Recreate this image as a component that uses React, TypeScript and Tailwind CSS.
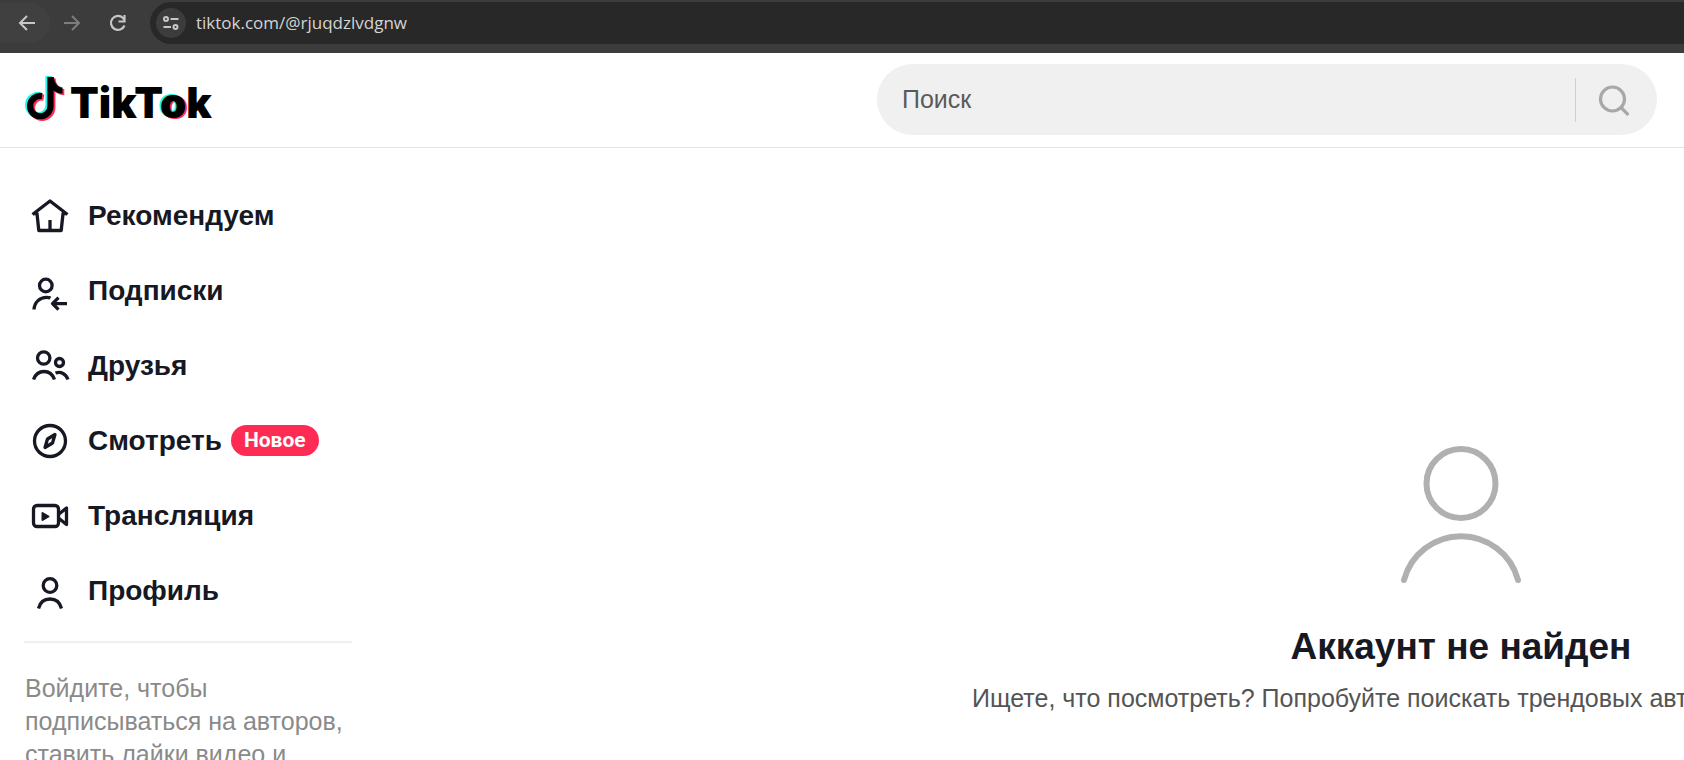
import type {ReactNode} from 'react'

function Icon({children}: {children: ReactNode}) {
  return (
    <svg className="size-10 shrink-0" viewBox="0 0 40 40" fill="none" stroke="currentColor" strokeWidth="3.3"
         strokeLinejoin="round" aria-hidden="true">
      {children}
    </svg>
  )
}

const links = [
  {
    label: 'Рекомендуем',
    icon: <>
      <path d="M2.500 18.500L20 5L37.500 18.500M3 17.700H7L8.800 34.500H31.200L33 17.700H37"/>
      <path d="M20 24V34"/>
    </>
  },
  {
    label: 'Подписки',
    icon: <>
      <circle cx="15.800" cy="14.500" r="6.300"/>
      <path d="M4 38.500C4.500 31 10 26.300 16.500 26.300C18 26.300 19.500 26.500 20.500 27"/>
      <path d="M37 32.700H22.500M28.500 26.700L22.500 32.700L28.500 38.700"/>
    </>
  },
  {
    label: 'Друзья',
    icon: <>
      <circle cx="13.700" cy="12" r="6.200"/>
      <circle cx="29.500" cy="16.500" r="4"/>
      <path d="M3.500 33.500C5.500 28 9 25.500 14 25.500C19 25.500 22.500 28 24.500 33.500"/>
      <path d="M25.500 27C31 25 36 28 38 33.500"/>
    </>
  },
  {
    label: 'Смотреть',
    badge: 'Новое',
    icon: <>
      <circle cx="20" cy="20" r="15.500"/>
      <path d="M25 13.500L17.500 18L15 26.500L22.500 22Z"/>
    </>
  },
  {
    label: 'Трансляция',
    icon: <>
      <rect x="3.500" y="9.500" width="25" height="21" rx="3.500"/>
      <path d="M29 18L36.500 12V28.500L29 22.500"/>
      <path d="M12.500 17V24L18.500 20.500Z" fill="currentColor" strokeWidth="2"/>
    </>
  },
  {
    label: 'Профиль',
    icon: <>
      <circle cx="20" cy="14.500" r="6.800"/>
      <path d="M8.500 37.500C10 31.500 14 28 20 28C26 28 30 31.500 31.500 37.500"/>
    </>
  }
]

function BrowserBar() {
  return (
    <div className="flex h-[53px] shrink-0 items-start gap-2 bg-[#3c3c3c] pt-[2px] text-[#c7c7c7]">
      <div className="flex h-[42px] items-center">
        <button type="button" aria-label="Назад" className="flex h-10 w-[50px] items-center justify-center rounded-r-full bg-[#404040] pl-1">
          <svg className="size-5" viewBox="0 0 20 20" fill="none" stroke="currentColor" strokeWidth="2">
            <path d="M18 10H3M10 3L3 10L10 17"/>
          </svg>
        </button>
        <button type="button" aria-label="Вперёд" className="flex h-10 w-11 items-center justify-center text-[#7d7d7d]">
          <svg className="size-5" viewBox="0 0 20 20" fill="none" stroke="currentColor" strokeWidth="2">
            <path d="M2 10H17M10 3L17 10L10 17"/>
          </svg>
        </button>
        <button type="button" aria-label="Обновить" className="flex h-10 w-12 items-center justify-center">
          <svg className="size-5" viewBox="0 0 20 20" fill="none" stroke="currentColor" strokeWidth="2.2">
            <path d="M16.500 12.500A7 7 0 1 1 15 5L17 7.500M16.500 2V8.500H10.500"/>
          </svg>
        </button>
      </div>
      <div className="flex h-[42px] flex-1 items-center gap-[10px] rounded-l-full bg-[#282828] pl-[6px]">
        <button type="button" aria-label="Сведения о сайте" className="flex size-[30px] items-center justify-center rounded-full bg-[#3c3c3c]">
          <svg className="size-4" viewBox="0 0 16 16" fill="none" stroke="currentColor" strokeWidth="2">
            <circle cx="3" cy="4" r="2"/>
            <path d="M7.500 4H15.500M0.500 12H8"/>
            <circle cx="12.500" cy="12" r="2"/>
          </svg>
        </button>
        <input aria-label="Адрес" defaultValue="tiktok.com/@rjuqdzlvdgnw"
               className="min-w-0 flex-1 bg-transparent font-['Open_Sans',sans-serif] text-[17px] text-[#d4d4d4] outline-none"/>
      </div>
    </div>
  )
}

function Note({color, transform}: {color: string, transform: string}) {
  return (
    <g transform={transform}>
      <path d="M26.500 1V30A10.200 10.200 0 1 1 18 20" fill="none" stroke={color} strokeWidth="6.200"/>
      <path d="M25 1H29.600C30.300 7 33.500 11 38.500 11.500V17.600C35 17.600 32 16.500 29.500 14.500H25Z" fill={color}/>
    </g>
  )
}

function Logo() {
  return (
    <a href="/" className="flex items-center gap-[2px] text-black">
      <svg className="h-12 w-11" viewBox="0 0 44 48" aria-hidden="true">
        <Note color="#25f4ee" transform="translate(-2 -1)"/>
        <Note color="#fe2c55" transform="translate(1.800 1.600)"/>
        <Note color="#000" transform="translate(0 0)"/>
      </svg>
      <span className="pt-[6px] font-[Inter,sans-serif] text-[42px] leading-none font-black">
        TikT<span className="[text-shadow:-2px_-1px_#25f4ee,2px_1px_#fe2c55]">o</span>k
      </span>
    </a>
  )
}

function SearchForm() {
  return (
    <form className="flex h-[71px] w-full max-w-[780px] items-center rounded-full bg-[#f0f0f0] pl-[25px]">
      <input type="search" aria-label="Поиск" placeholder="Поиск"
             className="min-w-0 flex-1 bg-transparent text-[25px] outline-none placeholder:text-[#5a5a5a]"/>
      <button type="submit" aria-label="Найти" className="flex h-11 w-[82px] items-center border-l border-[#cfcfcf] pl-[21px] text-[#a8a8a8]">
        <svg className="size-8" viewBox="0 0 32 32" fill="none" stroke="currentColor" strokeWidth="3.200">
          <circle cx="15.500" cy="15" r="12"/>
          <path d="M23.500 23L31.500 31"/>
        </svg>
      </button>
    </form>
  )
}

function Sidebar() {
  return (
    <aside className="w-[352px] shrink-0 pt-[30px] pl-6">
      <nav>
        <ul>
          {links.map(link => (
            <li key={link.label}>
              <a href="#" className="flex h-[75px] items-center pl-[6px]">
                <Icon>{link.icon}</Icon>
                <span className="ml-[18px] text-[28px] font-bold">{link.label}</span>
                {link.badge && (
                  <span className="ml-[9px] flex h-[31px] items-center rounded-full bg-[#fe2c55] px-[13px] font-[Roboto,sans-serif] text-[21px] font-bold text-white">
                    {link.badge}
                  </span>
                )}
              </a>
            </li>
          ))}
        </ul>
      </nav>
      <p className="mt-[13px] border-t-2 border-[#f0f0f0] pt-[29px] pl-px text-[25px] leading-[33px] text-[#8a8a8a]">
        Войдите, чтобы подписываться на авторов, ставить лайки видео и
      </p>
    </aside>
  )
}

export default function App() {
  return (
    <div className="flex h-screen flex-col overflow-hidden bg-white font-['Liberation_Sans',Arial,sans-serif] text-[#161823]">
      <BrowserBar/>
      <header className="flex h-[95px] shrink-0 items-center justify-between border-b border-[#e3e3e3] pr-[27px] pb-px pl-6">
        <Logo/>
        <SearchForm/>
      </header>
      <div className="flex min-h-0 flex-1">
        <Sidebar/>
        <main className="min-w-0 flex-1 overflow-hidden pt-[280px] pl-[620px]">
          <section className="flex w-[978px] flex-col items-center">
            <svg className="h-[170px] w-[140px]" viewBox="0 0 140 170" fill="none" stroke="#b0b0b0" strokeWidth="6"
                 strokeLinecap="round" aria-hidden="true">
              <circle cx="70" cy="55.500" r="34.500"/>
              <path d="M13 152A59 59 0 0 1 127 152"/>
            </svg>
            <h1 className="mt-[25px] text-[37px] leading-[48px] font-bold">Аккаунт не найден</h1>
            <p className="mt-[11px] self-start text-[25px] leading-[33px] whitespace-nowrap text-[#545454]">
              Ищете, что посмотреть? Попробуйте поискать трендовых авторов, хештеги и звуки.
            </p>
          </section>
        </main>
      </div>
    </div>
  )
}
